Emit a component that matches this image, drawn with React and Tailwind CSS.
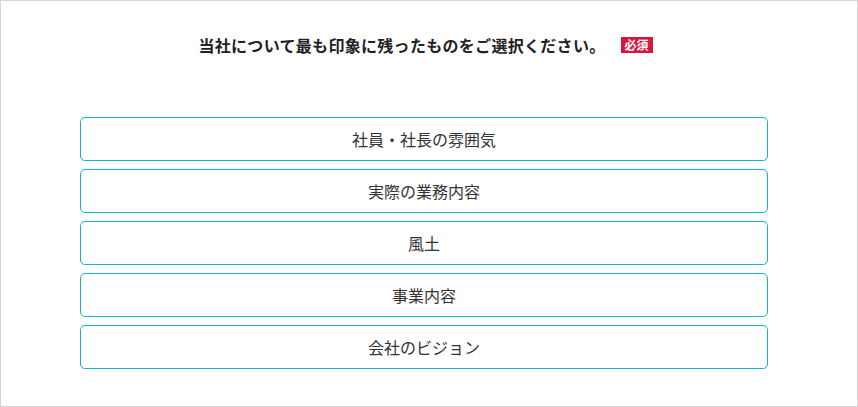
const options = [
  "社員・社長の雰囲気",
  "実際の業務内容",
  "風土",
  "事業内容",
  "会社のビジョン",
];

export default function App() {
  return (
    <div
      className="w-[858px] h-[407px] bg-white border border-[#d4d4d4] text-[#333]"
      style={{ fontFamily: '"Noto Sans CJK JP", "Noto Sans", sans-serif' }}
    >
      <div className="flex items-center justify-center pt-[33px] pr-[7px]">
        <h2 className="text-[16px] font-bold leading-[22px] text-[#222] tracking-[0.3px]">
          当社について最も印象に残ったものをご選択ください。
        </h2>
        <span className="ml-[15px] bg-[#d6173c] text-white text-[12px] font-bold leading-[16px] px-[4px]">
          必須
        </span>
      </div>
      <div className="flex flex-col gap-[8px] ml-[79px] w-[688px] mt-[61px]">
        {options.map((opt) => (
          <button
            key={opt}
            className="h-[44px] w-full rounded-[5px] border border-[#14b4d2] bg-white text-[16px] text-[#333] leading-none"
          >
            {opt}
          </button>
        ))}
      </div>
    </div>
  );
}
